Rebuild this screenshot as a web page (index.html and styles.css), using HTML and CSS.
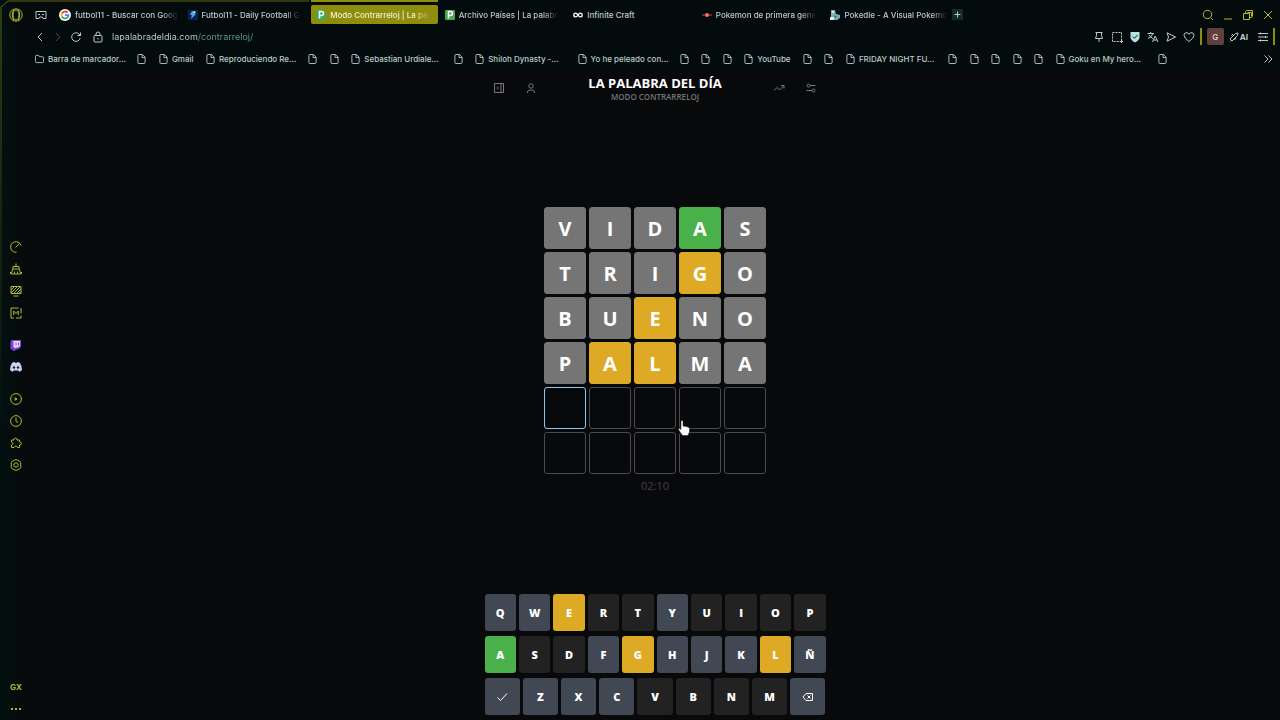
FILE: index.html
```html
<!DOCTYPE html>
<html lang="es">
<head>
    <meta charset="UTF-8">
    <meta name="viewport" content="width=device-width, initial-scale=1.0">
    <title>Modo Contrarreloj | La palabra del día</title>
    <link rel="stylesheet" href="styles.css">
</head>
<body>
    <!-- shared icons -->
    <svg class="defs" width="0" height="0" aria-hidden="true">
        <symbol id="file" viewBox="0 0 10 12"><path d="M1 2.200Q1 1 2.200 1H6l3 3v5.800Q9 11 7.800 11H2.200Q1 11 1 9.800zM5.600 1v3.400H9"/></symbol>
    </svg>

    <svg class="frame" width="450" height="440" viewBox="0 0 450 440" aria-hidden="true">
        <defs>
            <linearGradient id="fadeDown" gradientUnits="userSpaceOnUse" x1="0" y1="0" x2="0" y2="430">
                <stop offset="0" stop-color="#5f6614"/>
                <stop offset="1" stop-color="#5f6614" stop-opacity="0"/>
            </linearGradient>
        </defs>
        <path d="M1 430V7L8 1H309" fill="none" stroke="url(#fadeDown)"/>
    </svg>

    <div class="app">
        <aside class="sidebar">
            <button class="logo" aria-label="Menú">
                <svg width="14" height="14" viewBox="0 0 14 14"><circle cx="7" cy="7" r="6.200"/><ellipse cx="7" cy="7" rx="3" ry="5"/><path d="M5 1.500Q1.500 7 5 12.500M9 1.500Q12.500 7 9 12.500"/></svg>
            </button>
            <nav>
                <div class="group">
                    <button aria-label="GX Control"><svg viewBox="0 0 12 12"><path d="M11 4.500A5.300 5.300 0 1 0 6.500 11.300M5.500 6.500l4-4M8.500 1.300l1 .7"/></svg></button>
                    <button aria-label="Limpiador"><svg viewBox="0 0 12 12"><path d="M6 .5v3M3 3.500h6v2.500H3zM2.500 6L1.500 11h9L9.500 6M.5 9v2M11.500 9v2M4.500 8.500v2M7.500 8.500v2"/></svg></button>
                    <button aria-label="Fondos"><svg viewBox="0 0 12 12"><path d="M1 1.500h10v7H1zM3.500 11h5M1 5l3.500-3.500M1 8l6.500-6.500M3.500 8.500l7-7M6.500 8.500L11 4M9 8.500l2-2"/></svg></button>
                    <button aria-label="Mods"><svg viewBox="0 0 12 12"><path d="M8.500 1H1v10h3M6 11h5V8.500M11 6.500V1M3.700 8V4L6 6.500 8.300 4v4"/></svg></button>
                </div>
                <div class="group">
                    <button aria-label="Twitch"><svg class="solid" viewBox="0 0 12 12"><path fill="#7c45d8" d="M1.500 1H11v7L8 10.500H6L4.500 12H3v-1.500H.5V3z"/><path fill="#e6dcf6" d="M3.500 2H10v5L8 8.500H6L5 9.500V8.500H3.500z"/><path fill="#7c45d8" d="M5.500 3.500h1v3h-1zM8 3.500h1v3H8z"/></svg></button>
                    <button aria-label="Discord"><svg class="solid" viewBox="0 0 12 12"><path fill="#cdd3f5" d="M2 2Q3.500 1 4.500 1l.5.8h2L7.500 1Q8.500 1 10 2q2 3 2 7-1.500 1.500-3 1.700L8.300 9.600H3.700L3 10.700Q1.500 10.500 0 9 0 5 2 2z"/><circle cx="4" cy="6.500" r="1.200" fill="#1b2530"/><circle cx="8" cy="6.500" r="1.200" fill="#1b2530"/></svg></button>
                </div>
                <div class="group">
                    <button aria-label="Reproductor"><svg viewBox="0 0 12 12"><circle cx="6" cy="6" r="5.400"/><path fill="currentColor" d="M5.200 4.800L7 6 5.200 7.200z"/></svg></button>
                    <button aria-label="Historial"><svg viewBox="0 0 12 12"><circle cx="6" cy="6" r="5.400"/><path d="M6 2.500v4l2 1"/></svg></button>
                    <button aria-label="Extensiones"><svg viewBox="0 0 12 12"><path d="M1.500 3H4Q4 1 5.500 1T7 3h2.500v2Q11.500 5 11.500 6.500T9.500 8v2.500H7.500Q7 9 5.500 9.200T4 10.500H1.500V8Q3 7.500 3 6.500T1.500 5z"/></svg></button>
                    <button aria-label="Ajustes"><svg viewBox="0 0 12 12"><path d="M4.500 1.200L6 .5l1.500.7 2 .8 1.200 1.500V8.500L9.500 10l-2 .8-1.500.7-1.500-.7-2-.8L1.300 8.500v-5L2.500 2z"/><circle cx="6" cy="6" r="2.200"/></svg></button>
                </div>
            </nav>
            <div class="bottom">
                <button>GX</button>
                <button class="dots" aria-label="Más"><svg viewBox="0 0 12 12"><path d="M1 6h2M5 6h2M9 6h2" stroke-width="2"/></svg></button>
            </div>
        </aside>

        <div class="window">
            <header class="browser">
                <div class="tabbar">
                    <button class="corner" aria-label="Espacios"><svg width="12" height="12" viewBox="0 0 12 12"><path d="M1 2.500h10v7H8L7.300 8H4.700L4 9.500H1z"/><path d="M3 5.500h2M7 5.500h2"/></svg></button>
                    <div class="tabs">
                        <button class="tab">
                            <svg width="12" height="12" viewBox="0 0 12 12"><circle cx="6" cy="6" r="6" fill="#fff"/><g fill="none" stroke-width="1.800"><path stroke="#ea4335" d="M2.900 4.500A3.500 3.500 0 0 1 8.600 3.600"/><path stroke="#fbbc05" d="M2.900 7.500a3.500 3.500 0 0 1 0-3"/><path stroke="#34a853" d="M8.300 8.600A3.500 3.500 0 0 1 2.900 7.500"/><path stroke="#4285f4" d="M6 6.200h3.500A3.500 3.500 0 0 1 8.300 8.600"/></g></svg>
                            <span class="cut">futbol11 - Buscar con Goog</span>
                        </button>
                        <button class="tab">
                            <svg width="10" height="10" viewBox="0 0 10 10"><path fill="#0a2152" d="M0 0h10v10H0z"/><path fill="#4aa8e8" d="M4 1l4 .5L6 4h2L3 9l1-4H2z"/><circle cx="6.500" cy="2.500" r="1" fill="#f2f2a0"/></svg>
                            <span class="cut">Futbol11 - Daily Football G</span>
                        </button>
                        <button class="tab active">
                            <svg width="10" height="10" viewBox="0 0 10 10"><rect width="10" height="10" rx="1" fill="#45a852"/><path d="M3.500 8.500v-7h2a1.900 1.900 0 0 1 0 4h-2" fill="none" stroke="#fff" stroke-width="1.500"/></svg>
                            <span class="cut">Modo Contrarreloj | La pal</span>
                        </button>
                        <button class="tab">
                            <svg width="10" height="10" viewBox="0 0 10 10"><rect width="10" height="10" rx="1" fill="#45a852"/><path d="M3.500 8.500v-7h2a1.900 1.900 0 0 1 0 4h-2" fill="none" stroke="#fff" stroke-width="1.500"/></svg>
                            <span class="cut">Archivo Países | La palabr</span>
                        </button>
                        <button class="tab">
                            <svg width="10" height="10" viewBox="0 0 10 10"><path d="M5 5C3.500 2.500.8 2.600.8 5s2.700 2.500 4.200 0 4.200-2.400 4.200 0S6.500 7.500 5 5z" fill="none" stroke="#fff" stroke-width="1.400"/></svg>
                            <span>Infinite Craft</span>
                        </button>
                        <button class="tab">
                            <svg width="10" height="10" viewBox="0 0 10 10"><path d="M0 5h10" stroke="#b9544f"/><circle cx="5" cy="5" r="2" fill="#ff6b66"/></svg>
                            <span class="cut">Pokemon de primera gene</span>
                        </button>
                        <button class="tab">
                            <svg width="10" height="10" viewBox="0 0 10 10"><path fill="#7fb0b4" d="M1 0h4l1 4 4 1v3L7 10H0l1-4z"/><path fill="#dbe9ea" d="M0 7h4v3H0zM2 1h2v2H2z"/><path fill="#2d6b73" d="M4 5l3 2-2 1z"/></svg>
                            <span class="cut">Pokedle - A Visual Pokemo</span>
                        </button>
                    </div>
                    <button class="newtab" aria-label="Nueva pestaña"><svg width="11" height="11" viewBox="0 0 11 11"><path d="M5.500 2.500v6M2.500 5.500h6"/></svg></button>
                    <div class="controls">
                        <button aria-label="Buscar"><svg viewBox="0 0 12 12"><circle cx="5.500" cy="5.500" r="4.200"/><path d="M8.500 8.500L11 11"/></svg></button>
                        <button aria-label="Minimizar"><svg viewBox="0 0 12 12"><path d="M2 10h8"/></svg></button>
                        <button aria-label="Restaurar"><svg viewBox="0 0 12 12"><path d="M1.500 4.500h6v6h-6zM3.500 4.500v-2l1-1h6v6l-1 1h-2M5.500 4.500v-1h4v4"/></svg></button>
                        <button aria-label="Cerrar"><svg viewBox="0 0 12 12"><path d="M2 2l8 8M10 2l-8 8"/></svg></button>
                    </div>
                </div>

                <div class="addressbar">
                    <div class="nav-buttons">
                        <button aria-label="Atrás"><svg viewBox="0 0 12 12"><path d="M8 2L4 6l4 4"/></svg></button>
                        <button class="off" aria-label="Adelante"><svg viewBox="0 0 12 12"><path d="M4 2l4 4-4 4"/></svg></button>
                        <button aria-label="Recargar"><svg viewBox="0 0 12 12"><path d="M10.200 7A4.300 4.300 0 1 1 9 3l1.500 1.500M10.500 1.500v3h-3"/></svg></button>
                    </div>
                    <svg class="lock" width="12" height="12" viewBox="0 0 12 12"><rect x="2" y="4.500" width="8" height="6.500" rx="1"/><path d="M4 4.500V3a2 2 0 0 1 4 0v1.500M6 7v1.500"/></svg>
                    <input class="url" type="text" value="lapalabradeldia.com/contrarreloj/" aria-label="Dirección">
                    <div class="tools">
                        <button aria-label="Fijar"><svg viewBox="0 0 12 12"><path d="M2.500 1.500h7M3.500 1.500v3L2.500 7.500h7L8.500 4.500v-3M6 7.500V11"/></svg></button>
                        <button aria-label="Captura"><svg viewBox="0 0 12 12"><path stroke-dasharray="2 1" d="M1.500 1.500h9v9h-9z"/><path d="M9 10.500h3M10.500 9v3"/></svg></button>
                        <button aria-label="Bloqueador"><svg viewBox="0 0 12 12"><path fill="#b5e3e1" stroke="none" d="M1.500 1h9v5.500Q10 9.500 6 11.500 2 9.500 1.500 6.500z"/><path stroke="#0b2024" d="M3.800 5.500l1.700 1.800 3-3.300"/></svg></button>
                        <button aria-label="Traducir"><svg viewBox="0 0 12 12"><path d="M.5 2.500h6.500M3.700 1v1.500M5.800 2.500Q5 6 1 7.500M2 4q1.500 2.500 4 3.500M5.500 11l2.700-6 2.800 6M6.500 9h3.500"/></svg></button>
                        <button aria-label="Enviar"><svg viewBox="0 0 12 12"><path d="M2 1.800L10.500 6 2 10.200 3.500 6z"/></svg></button>
                        <button aria-label="Favorito"><svg viewBox="0 0 12 12"><path d="M6 10.500Q1 7 1 4.300A2.600 2.600 0 0 1 6 3.300a2.600 2.600 0 0 1 5 1Q11 7 6 10.500z"/></svg></button>
                    </div>
                    <i class="bar"></i>
                    <button class="profile">G</button>
                    <button class="ai"><svg width="10" height="12" viewBox="0 0 10 12"><path d="M1 8L6.500 2.500 9 2l-.5 2.500L3 10zM2.500 4.500L4 3M5.500 9L7 7M1 10.500l1-1"/></svg>AI</button>
                    <button class="easy" aria-label="Configuración rápida"><svg width="12" height="12" viewBox="0 0 12 12"><path d="M1 2.500h10M1 6h10M1 9.500h10M3.500 1.500v2M8.500 5v2M3.500 8.500v2"/></svg></button>
                    <i class="bar"></i>
                </div>

                <div class="bookmarks">
                    <div class="items">
                        <a href="#"><svg viewBox="0 0 10 12"><path d="M.5 3Q.5 2 1.500 2H4l1 1.500h3.500q1 0 1 1V9q0 1-1 1h-7q-1 0-1-1z"/></svg><span class="long">Barra de marcador...</span></a>
                        <a href="#" aria-label="Marcador"><svg><use href="#file"/></svg></a>
                        <a href="#"><svg><use href="#file"/></svg><span>Gmail</span></a>
                        <a href="#"><svg><use href="#file"/></svg><span class="long">Reproduciendo Re...</span></a>
                        <a href="#" aria-label="Marcador"><svg><use href="#file"/></svg></a>
                        <a href="#" aria-label="Marcador"><svg><use href="#file"/></svg></a>
                        <a href="#"><svg><use href="#file"/></svg><span class="long">Sebastian Urdiale...</span></a>
                        <a href="#" aria-label="Marcador"><svg><use href="#file"/></svg></a>
                        <a href="#"><svg><use href="#file"/></svg><span class="long">Shiloh Dynasty -...</span></a>
                        <a href="#"><svg><use href="#file"/></svg><span class="long">Yo he peleado con...</span></a>
                        <a href="#" aria-label="Marcador"><svg><use href="#file"/></svg></a>
                        <a href="#" aria-label="Marcador"><svg><use href="#file"/></svg></a>
                        <a href="#" aria-label="Marcador"><svg><use href="#file"/></svg></a>
                        <a href="#"><svg><use href="#file"/></svg><span>YouTube</span></a>
                        <a href="#" aria-label="Marcador"><svg><use href="#file"/></svg></a>
                        <a href="#" aria-label="Marcador"><svg><use href="#file"/></svg></a>
                        <a href="#"><svg><use href="#file"/></svg><span class="long">FRIDAY NIGHT FU...</span></a>
                        <a href="#" aria-label="Marcador"><svg><use href="#file"/></svg></a>
                        <a href="#" aria-label="Marcador"><svg><use href="#file"/></svg></a>
                        <a href="#" aria-label="Marcador"><svg><use href="#file"/></svg></a>
                        <a href="#" aria-label="Marcador"><svg><use href="#file"/></svg></a>
                        <a href="#" aria-label="Marcador"><svg><use href="#file"/></svg></a>
                        <a href="#"><svg><use href="#file"/></svg><span class="long">Goku en My hero...</span></a>
                        <a href="#" aria-label="Marcador"><svg><use href="#file"/></svg></a>
                    </div>
                    <button class="more" aria-label="Más marcadores"><svg width="10" height="12" viewBox="0 0 10 12"><path d="M1.500 2.500L5 6 1.500 9.500M5.500 2.500L9 6 5.500 9.500"/></svg></button>
                </div>
            </header>

            <main class="game">
                <header class="game-header">
                    <div class="side">
                        <button aria-label="Menú"><svg viewBox="0 0 12 12"><path d="M1.500 1.500h9v9h-9zM8 1.500v9M4 4.500L5.500 6 4 7.500"/></svg></button>
                        <button aria-label="Usuario"><svg viewBox="0 0 12 12"><circle cx="6" cy="4" r="2.200"/><path d="M2.500 11V10Q2.500 8 5 8h2q2.500 0 2.500 2v1"/></svg></button>
                    </div>
                    <div class="title">
                        <h1>LA PALABRA DEL DÍA</h1>
                        <p>MODO CONTRARRELOJ</p>
                    </div>
                    <div class="side">
                        <button aria-label="Estadísticas"><svg viewBox="0 0 12 12"><path d="M1 8.500L4 5.500l2.500 2.500L11 3.500M8 3.500h3v3"/></svg></button>
                        <button aria-label="Opciones"><svg viewBox="0 0 12 12"><circle cx="3.500" cy="3.500" r="1.500"/><circle cx="8.500" cy="8.500" r="1.500"/><path d="M5 3.500h5.500M1.500 8.500H7"/></svg></button>
                    </div>
                </header>

                <section class="play">
                    <div class="board">
                        <div class="tile gray">V</div><div class="tile gray">I</div><div class="tile gray">D</div><div class="tile green">A</div><div class="tile gray">S</div>
                        <div class="tile gray">T</div><div class="tile gray">R</div><div class="tile gray">I</div><div class="tile yellow">G</div><div class="tile gray">O</div>
                        <div class="tile gray">B</div><div class="tile gray">U</div><div class="tile yellow">E</div><div class="tile gray">N</div><div class="tile gray">O</div>
                        <div class="tile gray">P</div><div class="tile yellow">A</div><div class="tile yellow">L</div><div class="tile gray">M</div><div class="tile gray">A</div>
                        <div class="tile current"></div><div class="tile"></div><div class="tile"></div><div class="tile"></div><div class="tile"></div>
                        <div class="tile"></div><div class="tile"></div><div class="tile"></div><div class="tile"></div><div class="tile"></div>
                        <svg class="pointer" width="12" height="16" viewBox="0 0 12 16"><path fill="#fff" stroke="#222" stroke-width=".5" d="M3 1.500Q3 .5 4 .5t1 1V6l5 1q1.500.3 1.500 2v2.500L10 15.500H4.500L.8 10Q0 8.500 1.200 8.300L3 9.500z"/></svg>
                    </div>
                    <p class="timer">02:10</p>
                </section>

                <section class="keyboard">
                    <div class="row">
                        <button class="used">Q</button><button class="used">W</button><button class="yellow">E</button><button>R</button><button>T</button><button class="used">Y</button><button>U</button><button>I</button><button>O</button><button>P</button>
                    </div>
                    <div class="row">
                        <button class="green">A</button><button>S</button><button>D</button><button class="used">F</button><button class="yellow">G</button><button class="used">H</button><button class="used">J</button><button class="used">K</button><button class="yellow">L</button><button class="used">Ñ</button>
                    </div>
                    <div class="row">
                        <button class="used" aria-label="Enviar"><svg viewBox="0 0 12 12"><path d="M1.500 6.500l3 3 6.500-7"/></svg></button><button class="used">Z</button><button class="used">X</button><button class="used">C</button><button>V</button><button>B</button><button>N</button><button>M</button><button class="used" aria-label="Borrar"><svg viewBox="0 0 12 12"><path d="M4 2.500h6.500v7H4L1 6zM5.500 4.500l3 3M8.500 4.500l-3 3"/></svg></button>
                    </div>
                </section>
            </main>
        </div>
    </div>
</body>
</html>
```

FILE: styles.css
```css
* {
    box-sizing: border-box;
}
body {
    margin: 0;
    background-color: #08090b;
    color: #fff;
    font-family: Inter, sans-serif;
    font-size: 8px;
    font-weight: 500;
}
button {
    padding: 0;
    border: none;
    background: none;
    color: inherit;
    font: inherit;
    cursor: pointer;
}
svg {
    display: block;
    flex: none;
    fill: none;
    stroke: currentColor;
}
.defs, .frame {
    position: absolute;
}
.frame {
    top: 0;
    left: 0;
    pointer-events: none;
}
.app {
    display: grid;
    grid-template-columns: 30px 1fr;
    min-height: 100vh;
}

/* sidebar */
.sidebar {
    display: grid;
    grid-template-rows: 1fr auto 1fr;
    justify-items: center;
    padding: 8px 0 5px 2px;
    background: linear-gradient(to right, #03100f, #07090b);
    color: #b3b92e;
}
.sidebar svg {
    width: 12px;
    height: 12px;
}
.sidebar .solid {
    stroke: none;
}
.sidebar .logo {
    align-self: start;
}
.sidebar .logo svg {
    width: 14px;
    height: 14px;
}
.sidebar nav {
    display: grid;
    gap: 20px;
    margin-bottom: 11px;
}
.group {
    display: grid;
    gap: 10px;
}
.bottom {
    display: grid;
    align-content: end;
    justify-items: center;
    gap: 11px;
    font-weight: 700;
}

/* browser */
.window {
    display: flex;
    flex-direction: column;
    min-width: 0;
}
.browser {
    background-color: #040b0c;
    color: #b9cccb;
}
.tabbar {
    display: flex;
    align-items: center;
    height: 25px;
    padding: 4px 6px 0 5px;
}
.corner {
    margin-right: 7px;
}
.tabs {
    display: grid;
    grid-template-columns: repeat(7, minmax(0, 127px));
    gap: 2px;
    flex: 0 1 898px;
}
.tab {
    position: relative;
    display: flex;
    align-items: center;
    gap: 4px;
    height: 19px;
    padding: 0 4px 0 5px;
    border-radius: 2px;
}
.tab svg {
    stroke: none;
}
.tab span {
    white-space: nowrap;
}
.tab .cut {
    mask-image: linear-gradient(to right, #000 85%, transparent);
}
.tab.active {
    background-color: #8f8d0c;
    color: #f0f0d8;
}
.tab.active::before {
    content: "";
    position: absolute;
    top: -6px;
    left: 0;
    right: 0;
    height: 3px;
    background-color: #8f8d0c;
}
.newtab {
    background-color: #142b2b;
}
.controls {
    display: flex;
    gap: 8px;
    margin-left: auto;
    color: #b3b92e;
}
.controls svg, .nav-buttons svg, .tools svg {
    width: 12px;
    height: 12px;
}
.addressbar {
    display: flex;
    align-items: center;
    height: 23px;
    padding: 0 5px 0 4px;
}
.nav-buttons {
    display: flex;
    gap: 6px;
}
.off {
    color: #3a4747;
}
.lock {
    margin: 0 8px 0 10px;
}
.url {
    flex: 1;
    min-width: 0;
    padding: 0;
    border: none;
    outline: none;
    font: 9px Inter, sans-serif;
    color: transparent;
    background: linear-gradient(to right, #c3d8d7 86px, #5f9a94 86px);
    background-clip: text;
}
.tools {
    display: flex;
    gap: 6px;
}
.bar {
    width: 2px;
    height: 17px;
    background-color: #8f8d0c;
}
.tools + .bar {
    margin: 0 5px;
}
.profile {
    width: 17px;
    height: 17px;
    border-radius: 2px;
    background-color: #60403e;
    color: #f0dcda;
}
.ai {
    display: flex;
    align-items: center;
    gap: 1px;
    margin: 0 9px 0 5px;
    font-weight: 700;
}
.easy {
    margin-right: 4px;
}
.bookmarks {
    display: flex;
    align-items: center;
    justify-content: space-between;
    height: 22px;
    padding: 0 7px 0 5px;
}
.items {
    display: flex;
    justify-content: space-between;
    flex: 1;
    margin-right: 96px;
}
.items a {
    display: flex;
    align-items: center;
    gap: 4px;
    color: inherit;
    text-decoration: none;
    white-space: nowrap;
}
.items svg {
    width: 9px;
    height: 12px;
}
.items .long {
    width: 77px;
}

/* game */
.game {
    flex: 1;
    display: flex;
    flex-direction: column;
    align-items: center;
    padding: 5px 0;
    font-family: "Open Sans", sans-serif;
}
.game-header {
    display: flex;
    justify-content: space-between;
    width: 100%;
    max-width: 324px;
}
.side {
    display: flex;
    align-items: center;
    gap: 20px;
    padding-bottom: 2px;
    color: #777;
}
.side svg {
    width: 12px;
    height: 12px;
}
.title {
    text-align: center;
}
h1, p {
    margin: 0;
}
h1 {
    font-size: 13px;
    line-height: 16px;
}
.title p {
    font-size: 8px;
    font-weight: 600;
    line-height: 12px;
    color: #747474;
}
.play {
    flex: 1;
    display: flex;
    flex-direction: column;
    justify-content: center;
    padding-top: 3px;
}
.board {
    position: relative;
    display: grid;
    grid-template-columns: repeat(5, 42px);
    gap: 3px;
}
.tile {
    display: grid;
    place-items: center;
    height: 42px;
    border: 1px solid #4a4a4c;
    border-radius: 3px;
    font-size: 20px;
    font-weight: 700;
}
.tile.current {
    border-color: #8cc8f0;
}
.tile.gray {
    background-color: #757575;
    border-color: #757575;
}
.tile.green, .keyboard .green {
    background-color: #4ab04a;
    border-color: #4ab04a;
}
.tile.yellow, .keyboard .yellow {
    background-color: #deaa26;
    border-color: #deaa26;
}
.pointer {
    position: absolute;
    top: 213px;
    left: 134px;
}
.timer {
    margin-top: 5px;
    text-align: center;
    font-size: 11px;
    line-height: 14px;
    color: #444446;
}
.keyboard {
    display: grid;
    gap: 5px;
    width: 100%;
    max-width: 341px;
}
.row {
    display: flex;
    gap: 3px;
}
.row button {
    display: grid;
    place-items: center;
    flex: 1;
    height: 37px;
    border-radius: 3px;
    background-color: #222;
    font-size: 11px;
    font-weight: 800;
}
.row .used {
    background-color: #414853;
}
.row svg {
    width: 12px;
    height: 12px;
}
```
